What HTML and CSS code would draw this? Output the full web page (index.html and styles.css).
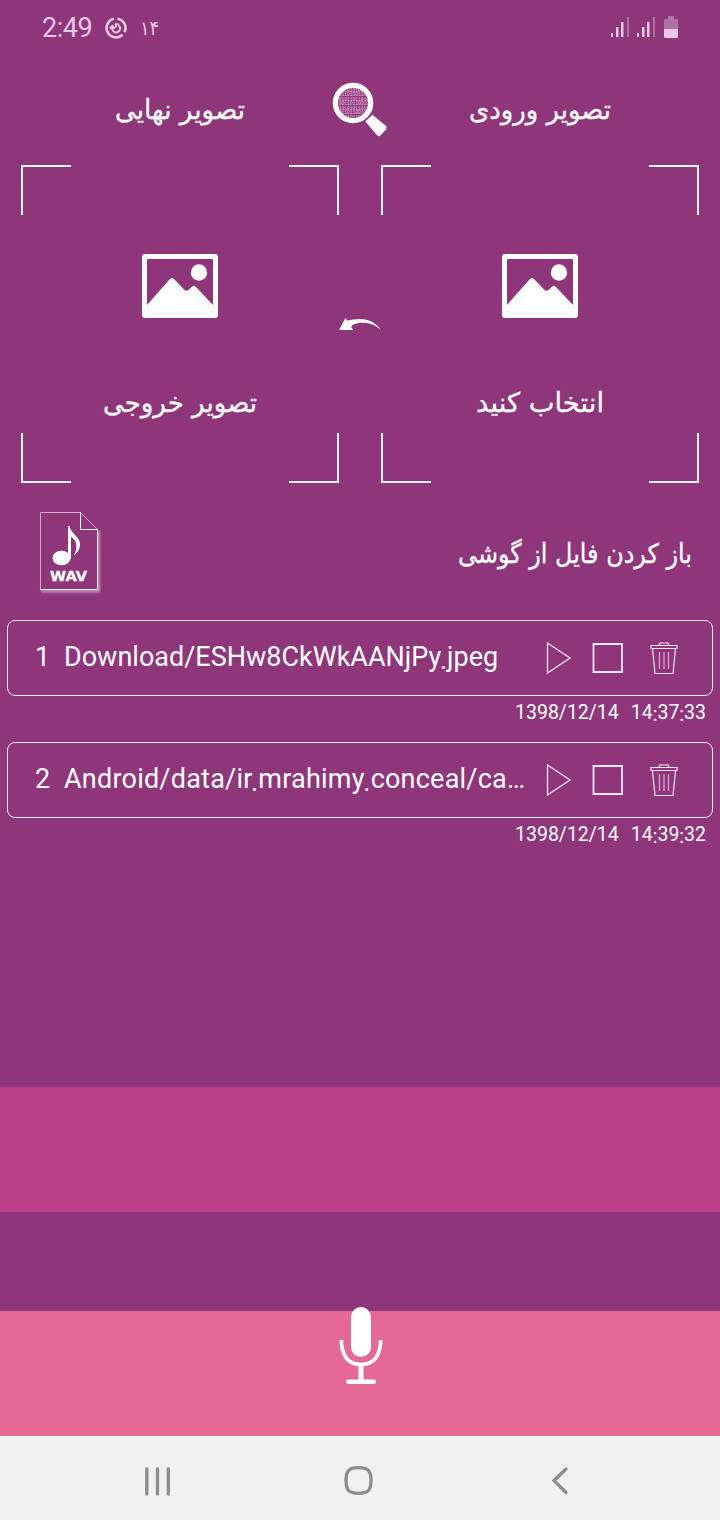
FILE: index.html
```html
<!DOCTYPE html>
<html lang="fa">
<head>
<meta charset="utf-8">
<title>Conceal</title>
<link rel="stylesheet" href="styles.css">
</head>
<body>
<div class="app">
  <header class="status">
    <span class="clock">2:49</span>
    <svg class="sync" width="22" height="22" viewBox="0 0 22 22" fill="none" stroke="currentColor">
      <path d="M9 1.800A9.400 9.400 0 1 0 17.500 17.800M12.500 1.700A9.400 9.400 0 0 1 19.500 15.200" stroke-width="2.600"/>
      <path d="M7.300 9.500C6.500 13.500 9 16 12 15.300C15.300 14.500 16.200 10.500 13.500 8M4.800 11.500L7.300 9L9.800 11.500M10.800 10.500V7.300H13.800" stroke-width="2"/>
    </svg>
    <svg class="day" width="24" height="26"><text x="2" y="20" textLength="19" lengthAdjust="spacingAndGlyphs">۱۴</text></svg>
    <svg class="signal" width="70" height="24" viewBox="0 0 70 24">
      <g fill="#e8c9e1"><path d="M1 17h2v4h-2zM6 11h2.500v10h-2.500zM11 6h2.500v15h-2.500zM27 17h2v4h-2zM32 11h2.500v10h-2.500zM37 6h2.500v15h-2.500z"/><path d="M54 13h14v8q0 1-1 1h-12q-1 0-1-1z"/></g>
      <g fill="#b071a4"><path d="M17 1h2v20h-2zM43 1h2v20h-2zM54 13V4q0-1 1-1h3V0h6v3h3q1 0 1 1v9z"/></g>
    </svg>
  </header>

  <section class="titles">
    <svg class="label" width="132" height="46"><text x="66" y="28" textLength="130" lengthAdjust="spacingAndGlyphs">تصویر نهایی</text></svg>
    <svg class="lens" width="56" height="56" viewBox="0 0 56 56">
      <clipPath id="glass"><circle cx="21" cy="21" r="15.500"/></clipPath>
      <g class="bits" clip-path="url(#glass)">
        <text x="4" y="9.500">010101010101</text><text x="4" y="14">101101001010</text><text x="4" y="18.500">001011011010</text><text x="4" y="23">100110110010</text><text x="4" y="27.500">010101011010</text><text x="4" y="32">101101100100</text><text x="4" y="36.500">010010110101</text>
      </g>
      <circle cx="21" cy="21" r="17.700" fill="none" stroke="#fff" stroke-width="5.200"/>
      <path d="M33.300 39.500L40.500 32.800L54 44Q55.500 45.500 54 47.500L48.500 53.500Q47 55 45.300 53.500Z" fill="#fff"/>
    </svg>
    <svg class="label" width="144" height="46"><text x="72" y="28" textLength="142" lengthAdjust="spacingAndGlyphs">تصویر ورودی</text></svg>
  </section>

  <section class="frames">
    <div class="frame">
      <svg class="picture" width="76" height="64" viewBox="0 0 76 64" fill="#fff"><path fill-rule="evenodd" d="M3 0H73Q76 0 76 3V61Q76 64 73 64H3Q0 64 0 61V3Q0 0 3 0ZM6 5Q5 5 5 6V51L27.500 25.500Q30 22.500 32.500 25.500L42 35.500Q44.500 38 47 35.500L49.500 33Q51.800 30.800 54 33L71 51V6Q71 5 70 5Z"/><circle cx="57" cy="18.500" r="8.200"/></svg>
      <svg class="label" width="156" height="46"><text x="78" y="28" textLength="154" lengthAdjust="spacingAndGlyphs">تصویر خروجی</text></svg>
    </div>
    <svg class="arrow" width="42" height="12" viewBox="0 0 42 12"><path d="M0 12L6.500 0L8.500 2.700C19 0 33-1 42 12C34 4.500 23 3 14.500 6.500Q12 8 12.300 9.500L14.500 12Z" fill="#fff"/></svg>
    <div class="frame">
      <svg class="picture" width="76" height="64" viewBox="0 0 76 64" fill="#fff"><path fill-rule="evenodd" d="M3 0H73Q76 0 76 3V61Q76 64 73 64H3Q0 64 0 61V3Q0 0 3 0ZM6 5Q5 5 5 6V51L27.500 25.500Q30 22.500 32.500 25.500L42 35.500Q44.500 38 47 35.500L49.500 33Q51.800 30.800 54 33L71 51V6Q71 5 70 5Z"/><circle cx="57" cy="18.500" r="8.200"/></svg>
      <svg class="label" width="130" height="46"><text x="65" y="28" textLength="128" lengthAdjust="spacingAndGlyphs">انتخاب کنید</text></svg>
    </div>
  </section>

  <section class="open">
    <svg class="wav" width="64" height="84" viewBox="0 0 64 84">
      <path class="glow" d="M2 79H59.500V19" fill="none" stroke="#c98fbd" stroke-width="3"/>
      <path d="M1.500 77.500V.5H41.500L58.500 17.500V77.500Z" fill="#8f367b"/>
      <path d="M1.500 77.500V.5H41.500L58.500 17.500" fill="none" stroke="#d7aacd"/>
      <path d="M41.500 .5V17.500H58.500V77.500H1.500" fill="none" stroke="#fff"/>
      <ellipse cx="22.500" cy="46" rx="9" ry="7.300" fill="#fff"/>
      <path d="M29 14H30.500C31.500 22 41.500 24 41 33C40.800 37 38.500 41 35 43.500C39.500 34.500 37.500 28 32 25V47H29Z" fill="#fff"/>
      <text x="29.500" y="69" textLength="37" lengthAdjust="spacingAndGlyphs">WAV</text>
    </svg>
    <svg class="label" width="242" height="50"><text x="121" y="29" textLength="234" lengthAdjust="spacingAndGlyphs">باز کردن فایل از گوشی</text></svg>
  </section>

  <section class="files">
    <article class="file">
      <div class="card">
        <span class="num">1</span>
        <span class="path one">Download/ESHw8CkWkAANjPy<i>.</i>jpeg</span>
        <svg class="tools" width="134" height="34" viewBox="0 0 134 34" fill="none" stroke="#f7e7f4" stroke-width="1.300"><path d="M2.500 2L25 17L2.500 32Z"/><path d="M48.500 3H77V31H48.500Z" stroke-width="1.800"/><path d="M106 4.500H132V7.500H106ZM114.500 4.500V2H123.500V4.500M107.500 8L110 32.500H128L130.500 8" stroke-width="1.200"/><path d="M114.500 11V28M119 11V28M123.500 11V28" stroke="#d5a5cb"/></svg>
      </div>
      <div class="date"><span>1398/12/14</span><span>14<i>:</i>37<i>:</i>33</span></div>
    </article>
    <article class="file">
      <div class="card">
        <span class="num">2</span>
        <span class="path two">Android/data/ir<i>.</i>mrahimy<i>.</i>conceal/ca…</span>
        <svg class="tools" width="134" height="34" viewBox="0 0 134 34" fill="none" stroke="#f7e7f4" stroke-width="1.300"><path d="M2.500 2L25 17L2.500 32Z"/><path d="M48.500 3H77V31H48.500Z" stroke-width="1.800"/><path d="M106 4.500H132V7.500H106ZM114.500 4.500V2H123.500V4.500M107.500 8L110 32.500H128L130.500 8" stroke-width="1.200"/><path d="M114.500 11V28M119 11V28M123.500 11V28" stroke="#d5a5cb"/></svg>
      </div>
      <div class="date"><span>1398/12/14</span><span>14<i>:</i>39<i>:</i>32</span></div>
    </article>
  </section>

  <div class="band"></div>
  <div class="gap"></div>
  <div class="record">
    <svg class="mic" width="44" height="80" viewBox="0 0 44 80"><rect x="12" y="1" width="20" height="50" rx="10" fill="#fff"/><path d="M2.500 34V38C4 52 11 58.500 22 58.500S40 52 41.500 38V34" fill="none" stroke="#fff" stroke-width="3.600"/><path d="M19.500 57H24.500V73.500H34.500Q37 73.500 37 75.700T34.500 78H9.500Q7 78 7 75.700T9.500 73.500H19.500Z" fill="#fff"/></svg>
  </div>
  <nav class="nav">
    <svg width="720" height="84" viewBox="0 0 720 84" fill="none" stroke="#8c8c8c" stroke-width="3.300"><path stroke-linecap="round" d="M146.800 33V58M157.500 33V58M168.300 33V58"/><path stroke-linecap="round" d="M566 33L554 44.500L566 56.500"/><path d="M358.500 31.700C368 31.700 371 34.500 371 44.500S368 57.300 358.500 57.300S346 54.500 346 44.500S349 31.700 358.500 31.700Z"/></svg>
  </nav>
</div>
</body>
</html>
```
FILE: styles.css
```css
* { box-sizing: border-box; }
body { margin: 0; background: #8f367b; }
svg { display: block; flex: none; }
.app { width: 720px; height: 1520px; display: flex; flex-direction: column; background: #8f367b; color: #fff; font-family: Roboto, "DejaVu Sans", sans-serif; overflow: hidden; }
.status { height: 56px; display: flex; align-items: center; padding: 0 40px 0 42px; color: #e8c9e1; }
.clock { font-size: 27px; line-height: 32px; width: 63px; letter-spacing: -0.5px; }
.day { margin-left: 11px; overflow: visible; }
.day text { fill: #e8c9e1; font: 20px "DejaVu Sans", sans-serif; }
.signal { margin-left: auto; }
.titles { height: 109px; padding-top: 24px; display: grid; grid-template-columns: 306px 108px 306px; justify-items: center; align-items: start; }
.titles .label { margin-top: 11px; }
.titles .label:first-child { margin-left: 54px; }
.titles .label:last-child { margin-right: 54px; }
.lens { margin-top: 2px; }
.bits text { font: 4.6px "Liberation Mono", monospace; fill: #e6c3de; }
.label { overflow: visible; }
.label text { font: 27px "DejaVu Sans", sans-serif; fill: #fff; stroke: #fff; stroke-width: 0.3px; text-anchor: middle; }
.frames { height: 318px; display: flex; padding: 0 21px; }
.frame { width: 318px; height: 318px; display: flex; flex-direction: column; align-items: center; padding-top: 89px; gap: 66px;
  --l: linear-gradient(#fdf3fb, #fdf3fb);
  background: var(--l) 0 0 / 50px 2px, var(--l) 0 0 / 2px 50px, var(--l) 100% 0 / 50px 2px, var(--l) 100% 0 / 2px 50px, var(--l) 0 100% / 50px 2px, var(--l) 0 100% / 2px 50px, var(--l) 100% 100% / 50px 2px, var(--l) 100% 100% / 2px 50px;
  background-repeat: no-repeat; }
.arrow { margin-top: 153px; }
.open { height: 137px; display: flex; justify-content: space-between; padding: 29px 24px 0 39px; }
.open .label { margin-top: 22px; }
.wav text { font: 900 14.5px "DejaVu Sans", sans-serif; fill: #fff; stroke: #fff; stroke-width: 0.3px; text-anchor: middle; }
.glow { filter: blur(1.2px); }
.files { height: 467px; padding: 0 7px; }
.file { height: 122px; }
.card { height: 76px; border: 1.5px solid #fbeff9; border-radius: 8px; display: flex; align-items: center; padding: 0 33px 0 27px; }
.num, .path { font-size: 27px; line-height: 36px; white-space: nowrap; }
.num { width: 29px; }
.two { letter-spacing: 0.22px; }
.card span { margin-top: -2px; }
.tools { margin-left: auto; }
i { font-style: normal; position: relative; top: 3px; }
.date i { top: 2px; }
.date { display: flex; justify-content: flex-end; gap: 12px; font-size: 19.5px; line-height: 24px; padding: 5px 7px 0 0; }
.band { height: 125px; background: #bb4189; }
.gap { height: 99px; }
.record { height: 125px; background: #e46a96; display: flex; justify-content: center; }
.mic { margin: -5px 0 0 2px; }
.nav { height: 84px; background: #f1f1f1; }
```
